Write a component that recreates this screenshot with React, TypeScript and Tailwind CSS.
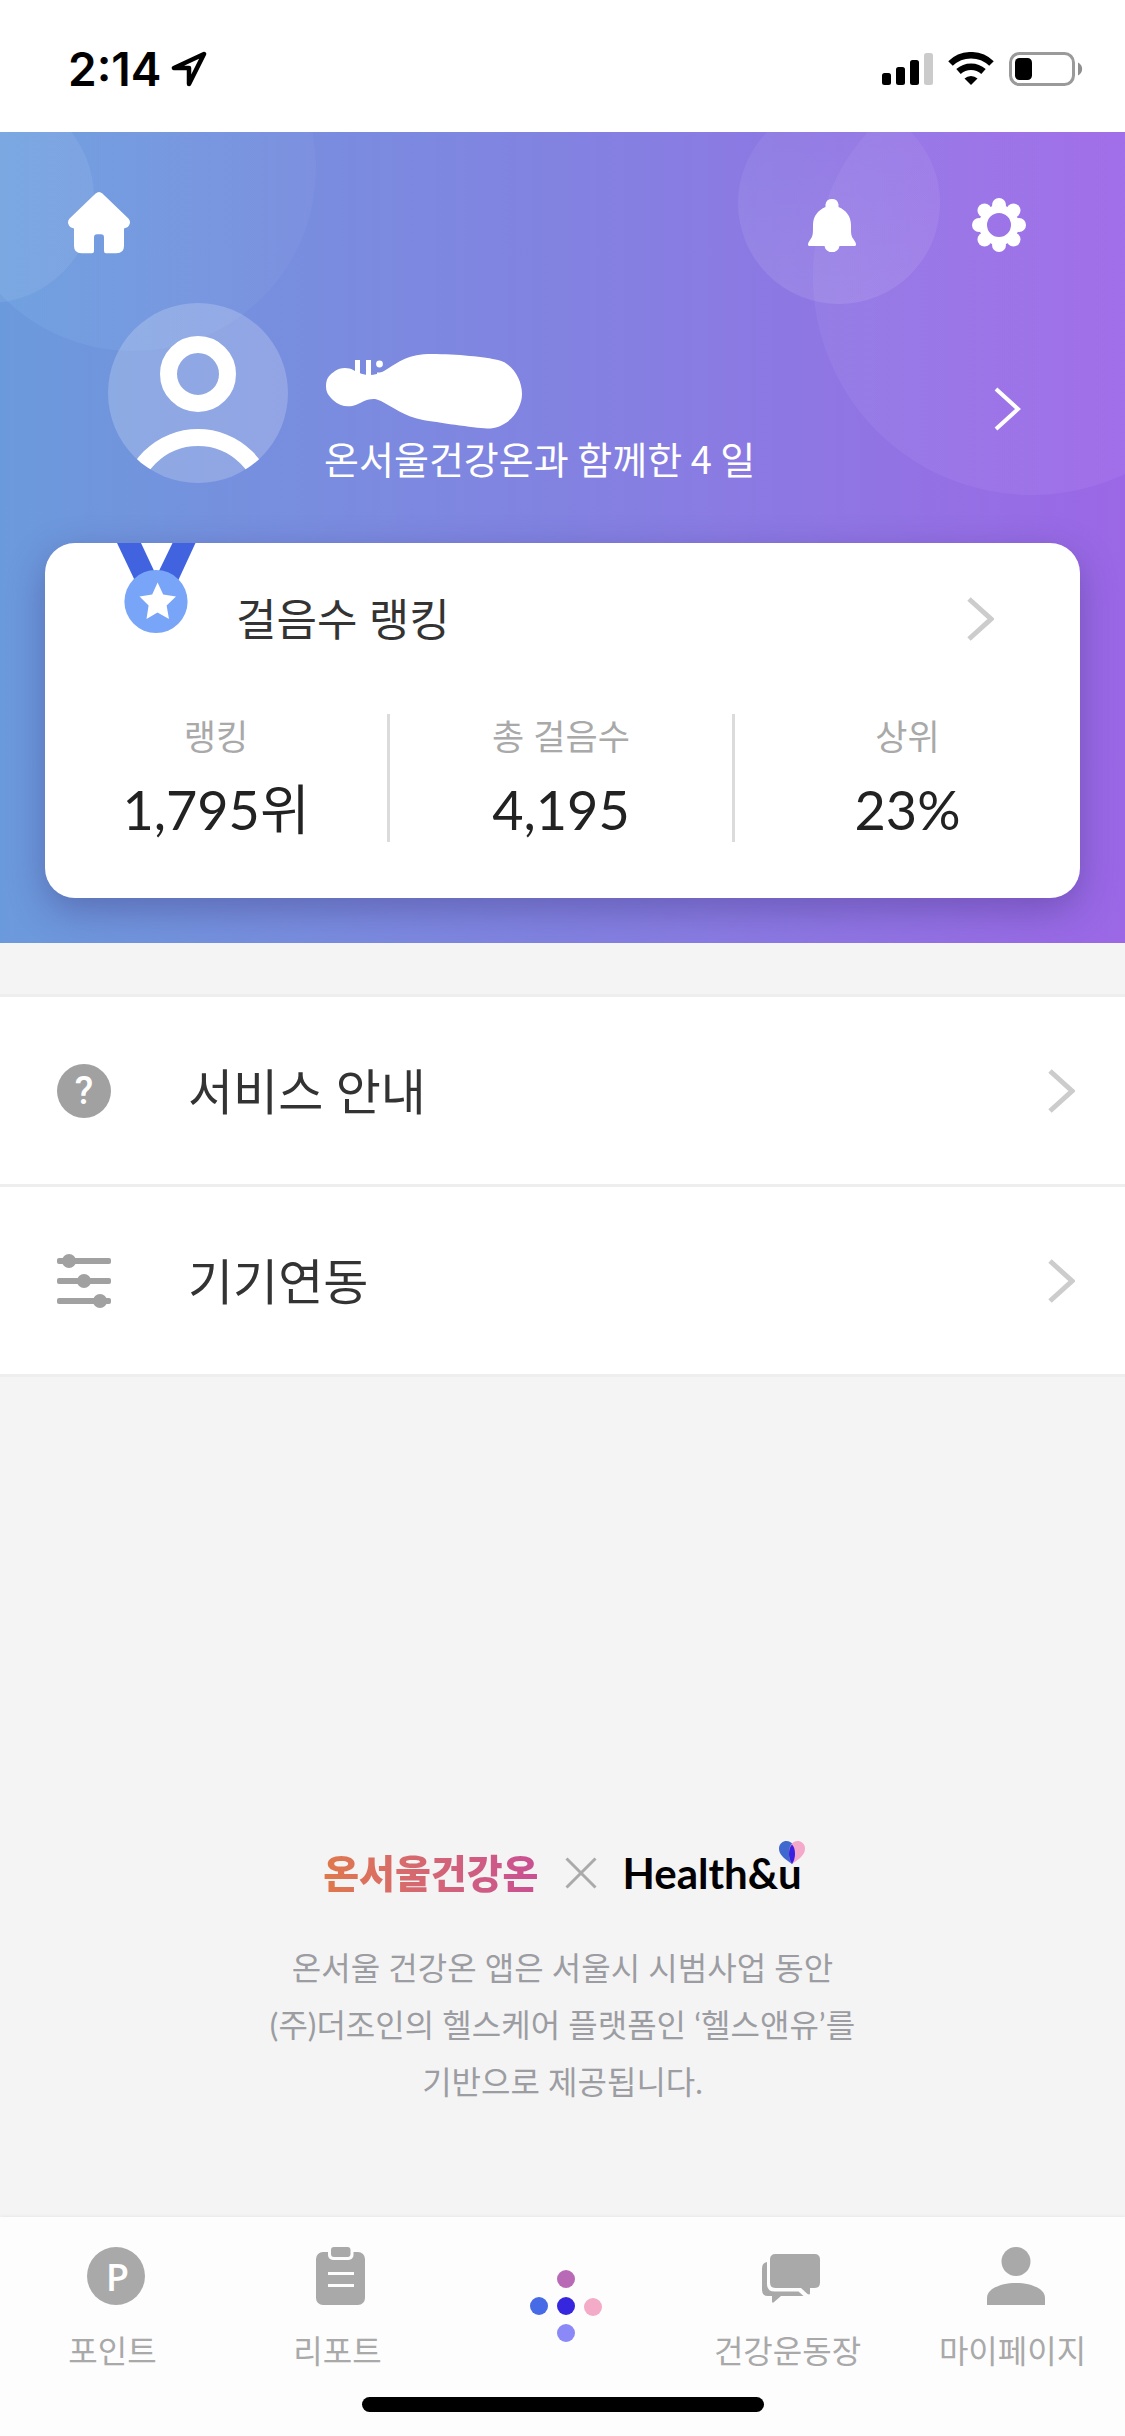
import React from "react";

function Chevron({ className, stroke = 5 }: { className?: string; stroke?: number }) {
  return (
    <svg viewBox="0 0 27 44" className={"h-[44px] w-[27px] shrink-0 " + (className ?? "")} fill="none" aria-hidden="true">
      <path d="M2 2 L24 22 L2 42" stroke="currentColor" strokeWidth={stroke} />
    </svg>
  );
}

function StatusBar() {
  return (
    <div className="flex h-[132px] items-center justify-between bg-white pt-[12px] pr-[42px] pb-[6px] pl-[68px]">
      <div className="flex items-center gap-[10px]">
        <span className="font-['Inter'] text-[46px] leading-[48px] font-semibold text-black">2:14</span>
        <svg viewBox="0 0 36 36" className="h-[36px] w-[36px]" fill="none" aria-hidden="true">
          <path d="M33 3 L3 17 H18 V33 Z" stroke="#000" strokeWidth="4.5" strokeLinejoin="round" />
        </svg>
      </div>
      <div className="flex items-center">
        <svg viewBox="0 0 52 34" className="h-[34px] w-[52px]" aria-hidden="true">
          <rect x="0" y="21" width="9" height="12" rx="2.5" />
          <rect x="14" y="15" width="9" height="18" rx="2.5" />
          <rect x="28" y="8" width="9" height="25" rx="2.5" />
          <rect x="42" y="1" width="9" height="32" rx="2.5" fill="#cbcbcb" />
        </svg>
        <svg viewBox="0 0 46 34" className="ml-[14px] h-[34px] w-[46px]" fill="none" aria-hidden="true">
          <path d="M2.5 11.5 A29.5 29.5 0 0 1 43.5 11.5" stroke="#000" strokeWidth="6.5" />
          <path d="M10.5 19.5 A18.5 18.5 0 0 1 35.5 19.5" stroke="#000" strokeWidth="6.5" />
          <path d="M23 33 L16.5 26.5 A9.5 9.5 0 0 1 29.5 26.5 Z" fill="#000" />
        </svg>
        <svg viewBox="0 0 74 34" className="ml-[15px] h-[34px] w-[74px]" fill="none" aria-hidden="true">
          <rect x="1.5" y="1.5" width="63" height="31" rx="9" stroke="#9a9a9a" strokeWidth="3" />
          <rect x="6" y="6" width="17" height="22" rx="4.5" fill="#000" />
          <path d="M69 10.5 C74.5 13 74.5 21 69 23.5 Z" fill="#8f8f8f" />
        </svg>
      </div>
    </div>
  );
}

function HomeIcon() {
  return (
    <svg viewBox="0 0 62 62" className="h-[62px] w-[62px]" fill="#fff" aria-hidden="true">
      <path d="M27.6 1.6 Q31 -1.4 34.4 1.6 L60.4 26.6 Q62.5 29 61.8 31.6 Q60.6 36 56 36.4 V54 Q56 61.3 48.5 61.3 H38 Q36 61.3 36 59 V45.5 Q36 42.3 33 42.3 H29 Q26 42.3 26 45.5 V59 Q26 61.3 24 61.3 H13.5 Q6 61.3 6 54 V36.4 Q1.4 36 0.2 31.6 Q-0.5 29 1.6 26.6 Z" />
    </svg>
  );
}

function BellIcon() {
  return (
    <svg viewBox="0 0 50 54" className="h-[54px] w-[50px]" fill="#fff" aria-hidden="true">
      <path d="M18.5 6.5 A6.6 6.6 0 0 1 31.5 6.5 V9 C39 12 44 18.5 44 27 C44 35 44 37.5 46 40.5 C48 43.5 49 44.8 49 46.5 Q49 48 47.5 48 H32.5 A7.6 7.6 0 0 1 17.5 48 H2.5 Q1 48 1 46.5 C1 44.8 2 43.5 4 40.5 C6 37.5 6 35 6 27 C6 18.5 11 12 18.5 9 Z" />
    </svg>
  );
}

function GearIcon() {
  const petals: [number, number][] = [
    [27, 7], [41.5, 12.5], [47, 27], [41.5, 41.5], [27, 47], [12.5, 41.5], [7, 27], [12.5, 12.5],
  ];
  return (
    <svg viewBox="0 0 54 54" className="h-[54px] w-[54px]" fill="none" aria-hidden="true">
      {petals.map(([x, y]) => (
        <circle key={x + "-" + y} cx={x} cy={y} r="7" fill="#fff" />
      ))}
      <circle cx="27" cy="27" r="16" stroke="#fff" strokeWidth="8" />
    </svg>
  );
}

function Avatar() {
  return (
    <svg viewBox="0 0 180 180" className="h-[180px] w-[180px] shrink-0" fill="none" aria-hidden="true">
      <defs>
        <clipPath id="avatar-clip">
          <circle cx="90" cy="90" r="90" />
        </clipPath>
      </defs>
      <circle cx="90" cy="90" r="90" fill="#fff" fillOpacity="0.2" />
      <g clipPath="url(#avatar-clip)" stroke="#fff" strokeWidth="17">
        <circle cx="90" cy="71" r="29.5" />
        <circle cx="90" cy="203" r="68.5" />
      </g>
    </svg>
  );
}

function HiddenName() {
  return (
    <svg viewBox="0 0 196 75" className="ml-[2px] h-[75px] w-[196px]" fill="#fff" role="img" aria-label="Hi">
      <rect x="29" y="6" width="5" height="16" />
      <rect x="40" y="6" width="5" height="18" />
      <circle cx="53.5" cy="10" r="3.4" />
      <rect x="51" y="18.5" width="5" height="5" />
      <path d="M0 32 C0 23 5 20 9 17 C14 13.5 22 13 28 16.5 C36 20.5 46 24 58 17 C74 7 82 0 106 0 C130 0 160 3 172 6 C186 9 196 25 196 40 C196 55 183 74.5 161 74.5 C148 74 110 68 97 66 C77 62 67 53 55 47 C46 42 38 47 32 50 C24 54 14 53 7 46 C2 41 0 38 0 32 Z" />
    </svg>
  );
}

function Medal() {
  return (
    <svg viewBox="0 0 80 92" className="h-[92px] w-[80px]" aria-hidden="true">
      <path d="M1 0 H25 L40 32 L20 40 Z" fill="#4263e0" />
      <path d="M56.5 0 H79.5 L61 40 L41 32 Z" fill="#4263e0" />
      <circle cx="40" cy="58.5" r="31.6" fill="#79a5f8" />
      <path d="M41.6 39.5 L47.2 51.5 L60 53.5 L50.6 62.6 L53 76 L41.5 69.6 L30.5 76 L32.6 62.6 L23.5 53.5 L36.2 51.5 Z" fill="#fff" />
    </svg>
  );
}

function SlidersIcon() {
  return (
    <svg viewBox="0 0 54 54" className="h-[54px] w-[54px]" fill="#a1a1a1" aria-hidden="true">
      <rect x="0" y="4" width="54" height="6" rx="2" />
      <rect x="0" y="24" width="54" height="6" rx="2" />
      <rect x="0" y="44" width="54" height="6" rx="2" />
      <circle cx="12" cy="7" r="7" />
      <circle cx="27" cy="27" r="7" />
      <circle cx="43" cy="47" r="7" />
    </svg>
  );
}

function HelpIcon() {
  return (
    <span className="flex h-[54px] w-[54px] items-center justify-center rounded-full bg-[#a1a1a1] font-['Roboto'] text-[38px] leading-[54px] font-medium text-white" aria-hidden="true">
      ?
    </span>
  );
}

function PointIcon() {
  return (
    <span className="flex h-[58px] w-[58px] items-center justify-center rounded-full bg-[#a9a9a9] pl-1 font-['Open_Sans'] text-[38px] leading-[58px] font-semibold text-white" aria-hidden="true">
      P
    </span>
  );
}

function ReportIcon() {
  return (
    <svg viewBox="0 0 50 58" className="h-[58px] w-[50px]" aria-hidden="true">
      <rect x="0" y="5" width="49" height="53" rx="7" fill="#a9a9a9" />
      <rect x="12" y="-6" width="25.5" height="19" rx="5" fill="#fdfdfd" />
      <rect x="15" y="0" width="19.5" height="10" rx="3" fill="#a9a9a9" />
      <rect x="12" y="25" width="26" height="3" fill="#fdfdfd" />
      <rect x="12" y="37" width="26" height="3" fill="#fdfdfd" />
    </svg>
  );
}

function ChatIcon() {
  return (
    <svg viewBox="0 0 58 58" className="h-[58px] w-[58px]" fill="#a9a9a9" aria-hidden="true">
      <path d="M5 15 V37 Q5 44.5 12.5 44.5 H36.5 L41.5 49 H19 L11.5 55.5 Q10 56 10 54.5 V49 H6 Q0 49 0 43 V21 Q0 16 5 15 Z" />
      <path d="M13.5 7 H52.5 Q58 7 58 12.5 V35.5 Q58 41 52.5 41 H48 V46.5 Q47.5 48 45.5 47 L39 41 H13.5 Q8 41 8 35.5 V12.5 Q8 7 13.5 7 Z" />
    </svg>
  );
}

function PersonIcon() {
  return (
    <svg viewBox="0 0 58 58" className="h-[58px] w-[58px]" fill="#a9a9a9" aria-hidden="true">
      <circle cx="29" cy="14.5" r="14.5" />
      <path d="M0 58 V51 C0 42 13 36 29 36 C45 36 58 42 58 51 V58 Z" />
    </svg>
  );
}

function DotsLogo() {
  return (
    <svg viewBox="0 0 74 74" className="h-[74px] w-[74px]" aria-hidden="true">
      <circle cx="37" cy="10" r="9" fill="#b96ab7" />
      <circle cx="10" cy="37" r="9" fill="#476ae6" />
      <circle cx="37" cy="37" r="9" fill="#3626de" />
      <circle cx="64" cy="38" r="9" fill="#f3abc8" />
      <circle cx="37" cy="64" r="9" fill="#8b88f8" />
    </svg>
  );
}

function Header() {
  return (
    <header className="relative overflow-hidden bg-linear-to-r from-[#6b9adc] via-[#8282e1] to-[#9b67e6] px-[45px] pb-[45px]">
      <div className="absolute -top-[147px] -left-[50px] h-[366px] w-[366px] rounded-full bg-linear-to-r from-[#88c0f0]/20 to-white/3" />
      <div className="absolute -top-[40px] -left-[117px] h-[211px] w-[211px] rounded-full bg-white/7" />
      <div className="absolute -top-[30px] right-[185px] h-[202px] w-[202px] rounded-full bg-linear-to-b from-white/4 to-white/10" />
      <div className="absolute -top-[74px] -right-[125px] h-[437px] w-[437px] rounded-full bg-linear-to-l from-[#b180f2]/30 to-white/5" />

      <div className="relative flex items-center justify-between pt-[60px] pr-[54px] pl-[23px]">
        <button type="button" aria-label="홈">
          <HomeIcon />
        </button>
        <div className="flex items-center gap-[115px] pt-1">
          <button type="button" aria-label="알림">
            <BellIcon />
          </button>
          <button type="button" aria-label="설정">
            <GearIcon />
          </button>
        </div>
      </div>

      <a href="#profile" className="relative mt-[49px] flex items-center pr-[59px] pl-[63px] text-white">
        <Avatar />
        <span className="flex flex-1 flex-col pt-[51px] pl-[36px]">
          <HiddenName />
          <span className="mt-[4px] font-['Noto_Sans_CJK_KR',sans-serif] text-[38px] leading-[50px]">
            온서울건강온과 함께한 4 일
          </span>
        </span>
        <Chevron stroke={4} className="mt-[32px]" />
      </a>

      <section className="relative mt-[60px] rounded-[30px] bg-white shadow-[0_12px_36px_rgba(50,40,110,0.36)]">
        <a href="#ranking" className="flex items-start pr-[86px] pl-[71px]">
          <Medal />
          <h2 className="mt-[46px] ml-[40px] flex-1 text-[44px] leading-[60px] font-normal text-[#333]">걸음수 랭킹</h2>
          <Chevron className="mt-[54px] text-[#ccc]" />
        </a>
        <dl className="grid grid-cols-3 pt-[65px] pb-[56px] text-center">
          <Stat label="랭킹" value="1,795위" divided />
          <Stat label="총 걸음수" value="4,195" divided />
          <Stat label="상위" value="23%" />
        </dl>
      </section>
    </header>
  );
}

function Stat({ label, value, divided }: { label: string; value: string; divided?: boolean }) {
  return (
    <div className={divided ? "h-[128px] border-r-[3px] border-[#dbdbdb]" : "h-[128px]"}>
      <dt className="text-[35px] leading-[44px] text-[#a9a9a9]">{label}</dt>
      <dd className="mt-[20px] text-[54px] leading-[64px] text-[#222]">{value}</dd>
    </div>
  );
}

function MenuRow({ icon, label }: { icon: React.ReactNode; label: string }) {
  return (
    <li className="border-b-[3px] border-[#eee]">
      <a href="#menu" className="flex h-[187px] items-center bg-white pr-[50px] pl-[57px]">
        {icon}
        <span className="ml-[77px] flex-1 text-[49px] leading-[64px] text-[#333]">{label}</span>
        <Chevron className="text-[#ccc]" />
      </a>
    </li>
  );
}

function NavItem({ icon, label }: { icon: React.ReactNode; label: string }) {
  return (
    <a href="#nav" className="flex flex-col items-center text-[#a9a9a9]">
      <span className="pl-[6px]">{icon}</span>
      <span className="mt-[22px] text-[32px] leading-[48px] whitespace-nowrap">{label}</span>
    </a>
  );
}

export default function App() {
  return (
    <div className="flex min-h-screen flex-col bg-[#f4f4f4] font-['Lato','Noto_Sans_CJK_KR',sans-serif]">
      <StatusBar />
      <Header />

      <ul className="mt-[51px] border-t-[3px] border-[#eee]">
        <MenuRow icon={<HelpIcon />} label="서비스 안내" />
        <MenuRow icon={<SlidersIcon />} label="기기연동" />
      </ul>

      <footer className="mt-auto flex flex-col items-center pb-[107px] text-center">
        <div className="flex items-center">
          <span className="bg-linear-to-r from-[#e0784a] to-[#c94f93] bg-clip-text text-[39px] leading-[56px] font-black text-transparent">
            온서울건강온
          </span>
          <svg viewBox="0 0 32 32" className="mx-[26px] h-[32px] w-[32px]" fill="none" aria-hidden="true">
            <path d="M1.5 1.5 L30.5 30.5 M30.5 1.5 L1.5 30.5" stroke="#aaa" strokeWidth="3" />
          </svg>
          <span className="relative text-[42px] leading-[56px] font-bold text-black">
            Health&amp;u
            <svg viewBox="0 0 26 24" className="absolute -top-[4px] -right-[3px] h-[24px] w-[26px]" aria-hidden="true">
              <path d="M13 23 C4 17 0 13 0 7.5 C0 2.5 4 0 7.5 0 C13 0 16 5 16 12 C16 17 15 20 13 23 Z" fill="#3f69cf" />
              <path d="M13 23 C22 17 26 13 26 7.5 C26 2.5 22 0 18.5 0 C13 0 10 5 10 12 C10 17 11 20 13 23 Z" fill="#f4a9cb" />
              <path d="M13 3.5 C17 7 17 18 13 23 C9 18 9 7 13 3.5 Z" fill="#3a20e0" />
            </svg>
          </span>
        </div>
        <p className="mt-[38px] text-[32px] leading-[57px] text-[#9c9da2]">
          온서울 건강온 앱은 서울시 시범사업 동안
          <br />
          (주)더조인의 헬스케어 플랫폼인 ‘헬스앤유’를
          <br />
          기반으로 제공됩니다.
        </p>
      </footer>

      <div className="bg-[#fdfdfd] pb-[24px] shadow-[0_0_4px_rgba(0,0,0,0.08)]">
        <nav className="grid grid-cols-5 pt-[30px]">
          <NavItem icon={<PointIcon />} label="포인트" />
          <NavItem icon={<ReportIcon />} label="리포트" />
          <a href="#home" aria-label="홈" className="flex justify-center pt-[22px] pl-[6px]">
            <DotsLogo />
          </a>
          <NavItem icon={<ChatIcon />} label="건강운동장" />
          <NavItem icon={<PersonIcon />} label="마이페이지" />
        </nav>
        <div className="mx-auto mt-[22px] h-[15px] w-[402px] rounded-full bg-black" />
      </div>
    </div>
  );
}
